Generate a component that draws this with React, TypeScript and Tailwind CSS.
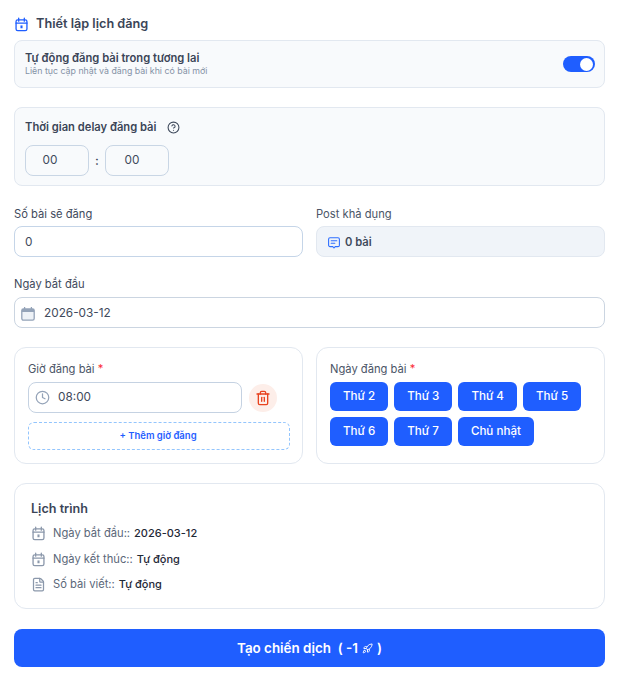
import { Clock, FileText, Rocket, Trash2, CircleHelp } from "lucide-react";

const days = ["Thứ 2", "Thứ 3", "Thứ 4", "Thứ 5", "Thứ 6", "Thứ 7", "Chủ nhật"];

const CalendarIcon = ({ className }: { className: string }) => (
  <svg viewBox="0 0 16 16" fill="none" stroke="currentColor" strokeWidth="1.4" className={className}>
    <rect x="2.2" y="3" width="11.6" height="11.6" rx="1.8" />
    <path d="M5 1.2v3.2M11 1.2v3.2M2.2 6.6h11.6" strokeLinecap="round" />
    <rect x="6.9" y="9" width="2.2" height="3" fill="currentColor" stroke="none" />
  </svg>
);

const DateFieldIcon = ({ className }: { className: string }) => (
  <svg viewBox="0 0 14 14" fill="none" className={className}>
    <rect x="0.8" y="2" width="12.4" height="11.2" rx="1.6" fill="#eef2f7" stroke="currentColor" strokeWidth="1.3" />
    <path d="M0.8 3.6a1.6 1.6 0 0 1 1.6-1.6h9.2a1.6 1.6 0 0 1 1.6 1.6V5H0.8z" fill="currentColor" />
    <path d="M3.6 0.4v2.4M10.4 0.4v2.4" stroke="currentColor" strokeWidth="1.3" strokeLinecap="round" />
  </svg>
);

const ChatIcon = ({ className }: { className: string }) => (
  <svg viewBox="0 0 12 12" fill="none" stroke="currentColor" strokeWidth="1.1" className={className}>
    <path d="M2 0.8h8a1.4 1.4 0 0 1 1.4 1.4v6a1.4 1.4 0 0 1-1.4 1.4H7.2L6 11 4.8 9.6H2A1.4 1.4 0 0 1 .6 8.2v-6A1.4 1.4 0 0 1 2 .8z" strokeLinejoin="round" />
    <path d="M3.2 3.8h5.6M3.2 6.2h3.6" strokeLinecap="round" />
  </svg>
);

const ScheduleRow = ({ icon, label, value, className }: { icon: React.ReactNode; label: string; value: string; className: string }) => (
  <div className={`flex items-center leading-4 ${className}`}>
    <span className="w-[22px] shrink-0">{icon}</span>
    <span className="text-[11.2px] text-[#5b6779]">{label}</span>
    <span className="ml-1 text-[11px] font-medium text-[#1f2937]">{value}</span>
  </div>
);

export default function App() {
  return (
    <div className="w-[620px] h-[680px] bg-white pl-[14px] pr-[15px] overflow-hidden font-['Inter',sans-serif] text-[#3f4a5c]">
      {/* Header */}
      <div className="h-10 pt-[8px] flex items-center gap-[7px]">
        <CalendarIcon className="w-[15px] h-[15px] text-[#1f5eff]" />
        <h3 className="text-[12.7px] font-semibold text-[#3b4557]">Thiết lập lịch đăng</h3>
      </div>

      {/* Auto post */}
      <div className="h-12 rounded-lg border border-[#e2e8f0] bg-[#f8fafc] pl-[10px] pr-[9px] flex items-center justify-between">
        <div>
          <p className="text-[11.2px] leading-[14px] font-semibold text-[#3b4557]">Tự động đăng bài trong tương lai</p>
          <p className="text-[8.8px] leading-[12px] text-[#8592a6]">Liên tục cập nhật và đăng bài khi có bài mới</p>
        </div>
        <div className="w-8 h-4 rounded-full bg-[#1f5eff] flex items-center justify-end pr-[2px]">
          <div className="w-[13px] h-[13px] rounded-full bg-white" />
        </div>
      </div>

      {/* Delay */}
      <div className="mt-[19px] h-[79px] rounded-lg border border-[#e2e8f0] bg-[#f8fafc] px-[10px] pt-[11px]">
        <div className="flex items-center gap-[11px] h-4">
          <span className="text-[11.2px] font-semibold text-[#3b4557]">Thời gian delay đăng bài</span>
          <CircleHelp className="w-[13px] h-[13px] text-[#3f4a5c]" />
        </div>
        <div className="mt-[10px] flex items-center">
          <div className="w-16 h-[31px] rounded-lg border border-[#c9d6e5] bg-[#f8fafc] flex items-center justify-center text-[11.8px] pr-[14px]">00</div>
          <span className="w-4 text-center text-xs font-semibold">:</span>
          <div className="w-16 h-[31px] rounded-lg border border-[#c9d6e5] bg-[#f8fafc] flex items-center justify-center text-[11.8px] pr-[10px]">00</div>
        </div>
      </div>

      {/* Count */}
      <div className="mt-[21px] grid grid-cols-2 gap-[13px]">
        <div>
          <label className="block h-[19px] text-[11.2px] leading-[14px] text-[#3f4a5c]">Số bài sẽ đăng</label>
          <div className="h-[31px] pt-[2px] rounded-lg border border-[#c5d5e8] flex items-center px-[10px] text-[11.8px]">0</div>
        </div>
        <div>
          <label className="block h-[19px] text-[11.2px] leading-[14px] text-[#4b5567]">Post khả dụng</label>
          <div className="h-[31px] pt-[2px] rounded-lg border border-[#e2e8f0] bg-[#f0f4f9] flex items-center pl-[11px] gap-[5px] text-[11.2px] font-semibold">
            <ChatIcon className="w-3 h-3 text-[#2f6fff]" />
            0 bài
          </div>
        </div>
      </div>

      {/* Start date */}
      <div className="mt-[20px]">
        <label className="block h-[20px] text-[11.2px] leading-[14px] text-[#3f4a5c]">Ngày bắt đầu</label>
        <div className="h-[31px] pt-[2px] rounded-lg border border-[#cbd5e1] flex items-center pl-[6px] gap-[9px] text-[11.8px]">
          <DateFieldIcon className="w-[14px] h-[14px] text-[#94a3b8]" />
          2026-03-12
        </div>
      </div>

      {/* Time and days */}
      <div className="mt-[19px] grid grid-cols-2 gap-[13px]">
        <div className="h-[117px] rounded-xl border border-[#e2e8f0] pl-[13px] pr-3 pt-[14px]">
          <p className="h-5 text-[11.2px] leading-[14px] text-[#4b5567]">Giờ đăng bài <span className="text-red-500">*</span></p>
          <div className="flex items-center gap-[7px]">
            <div className="w-[214px] h-[31px] rounded-lg border border-[#c5d2e2] flex items-center pl-[6px] gap-2 text-[11.8px]">
              <Clock className="w-[15px] h-[15px] text-[#94a3b8]" />
              08:00
            </div>
            <div className="w-7 h-7 rounded-full bg-[#fdeee9] flex items-center justify-center">
              <Trash2 className="w-4 h-4 text-[#e8431f]" />
            </div>
          </div>
          <div className="mt-[9px] h-7 pr-[2px] rounded-md border border-dashed border-[#93c5fd] flex items-center justify-center text-[9.5px] font-semibold text-[#1f5eff]">
            + Thêm giờ đăng
          </div>
        </div>
        <div className="h-[117px] rounded-xl border border-[#e2e8f0] px-[13px] pt-[14px]">
          <p className="h-5 text-[11.2px] leading-[14px] text-[#4b5567]">Ngày đăng bài <span className="text-red-500">*</span></p>
          <div className="flex flex-wrap gap-[6px]">
            {days.map((day) => (
              <div key={day} className="h-[29px] px-[13px] rounded-md bg-[#1f5eff] flex items-center text-[11.6px] font-medium text-white">
                {day}
              </div>
            ))}
          </div>
        </div>
      </div>

      {/* Schedule */}
      <div className="mt-[19px] h-[126px] rounded-xl border border-[#e2e8f0] px-4 pt-4">
        <h4 className="text-[12.6px] leading-[18px] font-semibold text-[#3b4557]">Lịch trình</h4>
        <ScheduleRow className="mt-[7px]" icon={<CalendarIcon className="w-[15px] h-[15px] text-[#8b98ab]" />} label="Ngày bắt đầu::" value="2026-03-12" />
        <ScheduleRow className="mt-[10px]" icon={<CalendarIcon className="w-[15px] h-[15px] text-[#8b98ab]" />} label="Ngày kết thúc::" value="Tự động" />
        <ScheduleRow className="mt-[9px]" icon={<FileText className="w-[15px] h-[15px] text-[#8b98ab]" />} label="Số bài viết::" value="Tự động" />
      </div>

      {/* Submit */}
      <button className="mt-5 w-full h-[38px] rounded-lg bg-[#1f5eff] flex items-center justify-center text-[13.4px] font-semibold text-white">
        Tạo chiến dịch&nbsp;&nbsp;( -1
        <Rocket className="w-[11px] h-[11px] mx-1" />
        )
      </button>
    </div>
  );
}
